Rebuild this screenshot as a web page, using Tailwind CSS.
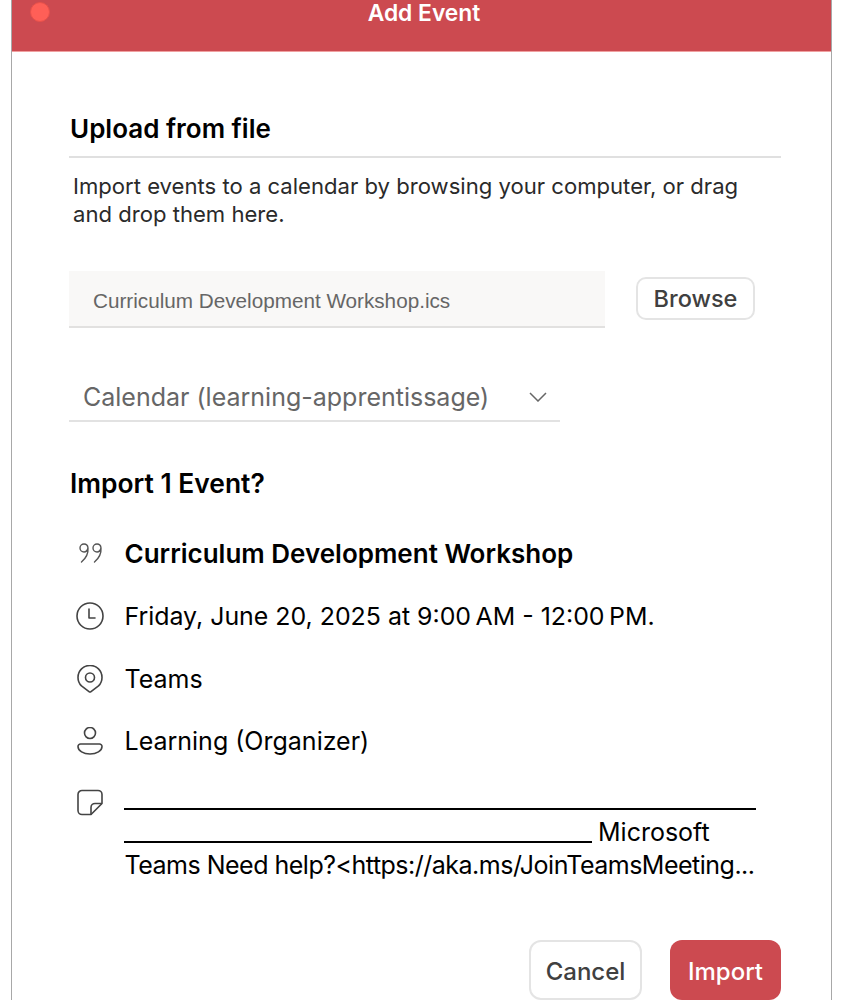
<!DOCTYPE html>
<html>
<head>
<meta charset="utf-8">
<script src="https://cdn.jsdelivr.net/npm/@tailwindcss/browser@4"></script>
</head>
<body class="bg-white font-['Inter',sans-serif] overflow-hidden">
<div class="ml-[11px] w-[821px] h-[1000px] border-x border-[#a8a8a8] flex flex-col overflow-hidden">
  <header class="h-[52px] shrink-0 bg-[#cc4a50] border-b border-[#f0a0a0] relative flex justify-center pl-[5px]">
    <span class="absolute left-[18px] top-[2px] w-5 h-5 rounded-full bg-[#ff5f57] border border-[#e8504a]"></span>
    <h1 class="text-white text-[22.800px] leading-[25px] font-semibold">Add Event</h1>
  </header>
  <main class="pl-[57px] pr-[50px] flex flex-col">
    <h2 class="mt-[61px] ml-[1px] text-[26px] leading-[32px] font-semibold text-black">Upload from file</h2>
    <div class="mt-[11px] h-[2px] bg-[#e0e0e0]"></div>
    <p class="mt-[14px] ml-[4px] text-[22.100px] leading-[28px] text-[#2a2a2a] whitespace-nowrap">Import events to a calendar by browsing your computer, or drag<br>and drop them here.</p>
    <div class="mt-[43px] flex items-start">
      <div class="w-[536px] h-[57px] bg-[#f9f8f7] border-b-2 border-[#e2e1e0] pl-[24px] pt-[5px] flex items-center text-[#666666] text-[20.700px] font-['Liberation_Sans',sans-serif]">Curriculum Development Workshop.ics</div>
      <button class="ml-[31px] mt-[6px] w-[119px] h-[43px] rounded-[10px] border-2 border-[#e4e4e4] bg-white text-[#404040] text-[23.500px] font-medium flex items-center justify-center pt-[1px]">Browse</button>
    </div>
    <div class="mt-[45px] w-[491px] h-[49px] border-b-2 border-[#e2e2e2] pl-[14px] pr-[13px] pt-[3px] flex items-center justify-between text-[#666666] text-[25px]">
      <span>Calendar (learning-apprentissage)</span>
      <svg class="w-[18px] h-[10px] -mt-[3px]" viewBox="0 0 18 10" fill="none" stroke="#666" stroke-width="1.5"><path d="M1 1l8 8 8-8"/></svg>
    </div>
    <h2 class="mt-[45px] ml-[1px] text-[26.400px] leading-[32px] font-semibold text-black">Import 1 Event?</h2>
    <div class="mt-[39px] flex flex-col text-[25px] leading-[32px] text-black">
      <div class="flex h-[32px] items-center">
        <svg class="w-[28px] h-[28px] ml-[7px] mr-[20.500px] -mt-[2px] shrink-0" viewBox="0 0 28 28" fill="none" stroke="#555" stroke-width="1.4"><path d="M12 9c-.2-2.500-1.800-4-4-4a4 4 0 0 0 0 8c1.800 0 3.300-1 4-4zm0 0c.4 5-1.800 10-6.500 14" stroke-linecap="round"/><path d="M25 9c-.2-2.500-1.800-4-4-4a4 4 0 0 0 0 8c1.800 0 3.300-1 4-4zm0 0c.4 5-1.800 10-6.500 14" stroke-linecap="round"/></svg>
        <span class="text-[26px] font-semibold">Curriculum Development Workshop</span>
      </div>
      <div class="flex h-[32px] items-center mt-[30px]">
        <svg class="w-[28px] h-[28px] ml-[7px] mr-[20.500px] shrink-0" viewBox="0 0 28 28" fill="none" stroke="#444" stroke-width="1.600"><circle cx="14" cy="14" r="13"/><path d="M13 7v9h6" stroke-linecap="round" stroke-linejoin="round"/></svg>
        <span class="text-[24.900px]">Friday, June 20, 2025 at 9:00&#8239;AM - 12:00&#8239;PM.</span>
      </div>
      <div class="flex h-[32px] items-center mt-[31px]">
        <svg class="w-[28px] h-[28px] ml-[7px] mr-[20.500px] -mt-[1px] shrink-0" viewBox="0 0 28 28" fill="none" stroke="#444" stroke-width="1.600"><path d="M13 26.600L5.500 20.900a12 12 0 1 1 17 0L15 26.600a1.600 1.600 0 0 1-2 0z" stroke-linejoin="round"/><circle cx="14" cy="12.500" r="4.500"/></svg>
        <span>Teams</span>
      </div>
      <div class="flex h-[32px] items-center mt-[30px]">
        <svg class="w-[28px] h-[28px] ml-[7px] mr-[20.500px] shrink-0" viewBox="0 0 28 28" fill="none" stroke="#444" stroke-width="1.600"><circle cx="14" cy="6" r="5.500"/><path d="M4.500 17h19a2.500 2.500 0 0 1 2.500 2.500c0 4.500-5.500 7.500-12 7.500s-12-3-12-7.500A2.500 2.500 0 0 1 4.500 17z" stroke-linejoin="round"/></svg>
        <span>Learning (Organizer)</span>
      </div>
      <div class="flex mt-[26px]">
        <svg class="w-[28px] h-[28px] ml-[7px] mr-[20px] mt-[5px] shrink-0" viewBox="0 0 28 28" fill="none" stroke="#444" stroke-width="1.600"><path d="M6 2.500h16a4 4 0 0 1 4 4v9L15 26.500H6a4 4 0 0 1-4-4v-16a4 4 0 0 1 4-4z" stroke-linejoin="round"/><path d="M26 15.500h-7a4 4 0 0 0-4 4v7" stroke-linejoin="round"/></svg>
        <div class="w-[632px] flex flex-col">
          <div class="h-[33px] relative"><div class="absolute left-0 right-0 bottom-[6px] h-[2px] bg-black"></div></div>
          <div class="h-[33px] flex items-center -mb-[1px]"><span class="w-[468px] h-[2px] bg-black self-end mb-[6px]"></span><span class="ml-[6px] -mt-[2px]">Microsoft</span></div>
          <div class="h-[33px] mt-[1px] ml-[0.500px] whitespace-nowrap tracking-[-0.500px]">Teams Need help?&lt;https://aka.ms/JoinTeamsMeeting...</div>
        </div>
      </div>
    </div>
    <div class="mt-[58px] flex justify-end gap-[28px] text-[24px] font-medium">
      <button class="w-[113px] h-[60px] pt-[3px] rounded-[12px] border-2 border-[#e4e4e4] bg-white text-[#404040]">Cancel</button>
      <button class="w-[111px] h-[60px] pt-[3px] rounded-[12px] bg-[#cc4a50] text-white">Import</button>
    </div>
  </main>
</div>
</body>
</html>
